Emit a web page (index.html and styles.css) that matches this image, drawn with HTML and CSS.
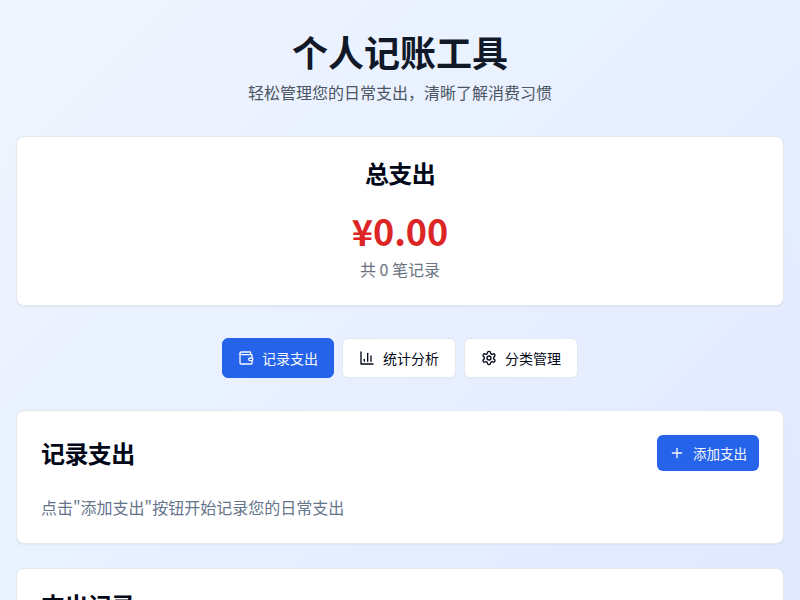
FILE: index.html
```html
<!DOCTYPE html>
<html lang="zh-CN">
<head>
<meta charset="utf-8">
<title>个人记账工具</title>
<link rel="stylesheet" href="styles.css">
</head>
<body>
<div class="page">
  <header class="header">
    <h1>个人记账工具</h1>
    <p>轻松管理您的日常支出，清晰了解消费习惯</p>
  </header>
  <section class="card total">
    <h2>总支出</h2>
    <div class="amount">¥0.00</div>
    <div class="count">共 0 笔记录</div>
  </section>
  <nav class="tabs">
    <button class="tab active">
      <svg class="icon" viewBox="0 0 24 24"><path d="M19 7V4a1 1 0 0 0-1-1H5a2 2 0 0 0 0 4h15a1 1 0 0 1 1 1v4h-3a2 2 0 0 0 0 4h3a1 1 0 0 0 1-1v-2a1 1 0 0 0-1-1"/><path d="M3 5v14a2 2 0 0 0 2 2h15a1 1 0 0 0 1-1v-4"/></svg>
      记录支出
    </button>
    <button class="tab">
      <svg class="icon" viewBox="0 0 24 24"><path d="M3 3v18h18"/><path d="M18 17V9"/><path d="M13 17V5"/><path d="M8 17v-3"/></svg>
      统计分析
    </button>
    <button class="tab">
      <svg class="icon" viewBox="0 0 24 24"><path d="M12.22 2h-.44a2 2 0 0 0-2 2v.18a2 2 0 0 1-1 1.73l-.43.25a2 2 0 0 1-2 0l-.15-.08a2 2 0 0 0-2.73.73l-.22.38a2 2 0 0 0 .73 2.73l.15.1a2 2 0 0 1 1 1.72v.51a2 2 0 0 1-1 1.74l-.15.09a2 2 0 0 0-.73 2.73l.22.38a2 2 0 0 0 2.73.73l.15-.08a2 2 0 0 1 2 0l.43.25a2 2 0 0 1 1 1.73V20a2 2 0 0 0 2 2h.44a2 2 0 0 0 2-2v-.18a2 2 0 0 1 1-1.73l.43-.25a2 2 0 0 1 2 0l.15.08a2 2 0 0 0 2.73-.73l.22-.39a2 2 0 0 0-.73-2.73l-.15-.08a2 2 0 0 1-1-1.74v-.5a2 2 0 0 1 1-1.74l.15-.09a2 2 0 0 0 .73-2.73l-.22-.38a2 2 0 0 0-2.73-.73l-.15.08a2 2 0 0 1-2 0l-.43-.25a2 2 0 0 1-1-1.73V4a2 2 0 0 0-2-2z"/><circle cx="12" cy="12" r="3"/></svg>
      分类管理
    </button>
  </nav>
  <section class="card panel">
    <div class="panel-head">
      <h2>记录支出</h2>
      <button class="add">
        <svg class="icon" viewBox="0 0 24 24"><path d="M5 12h14"/><path d="M12 5v14"/></svg>
        添加支出
      </button>
    </div>
    <p class="hint">点击"添加支出"按钮开始记录您的日常支出</p>
  </section>
  <section class="card panel">
    <div class="panel-head">
      <h2>支出记录</h2>
    </div>
  </section>
</div>
</body>
</html>
```
FILE: styles.css
```css
* { box-sizing: border-box; }
html, body { margin: 0; }
body {
  min-height: 760px;
  background: linear-gradient(135deg, #eff6ff 0%, #e0e7ff 100%);
  font-family: "Noto Sans CJK SC", "Noto Sans", sans-serif;
  color: #020817;
}
.page { padding: 31px 16px 16px; }
.header { text-align: center; margin-bottom: 32px; }
.header h1 {
  margin: 0 0 9px;
  font-size: 36px;
  line-height: 40px;
  font-weight: 700;
  color: #111827;
}
.header p { margin: 0; font-size: 16px; line-height: 24px; color: #4b5563; }
.card {
  background: #fff;
  border: 1px solid #e2e8f0;
  border-radius: 8px;
  box-shadow: 0 1px 2px rgba(0,0,0,.05);
}
.total { padding: 22px 24px 24px; text-align: center; margin-bottom: 32px; height: 170px; }
.total h2 { margin: 0; font-size: 24px; line-height: 28px; font-weight: 600; letter-spacing: -0.6px; }
.amount { font-size: 36px; line-height: 40px; font-weight: 700; color: #dc2626; margin-top: 23px; }
.count { font-size: 16px; line-height: 24px; color: #6b7280; margin-top: 7px; }
.tabs { display: flex; justify-content: center; gap: 8px; margin-bottom: 32px; }
.tab, .add {
  display: inline-flex;
  align-items: center;
  justify-content: center;
  gap: 8px;
  font: inherit;
  font-size: 14px;
  font-weight: 400;
  border-radius: 6px;
  cursor: pointer;
}
.tab {
  width: 114px;
  height: 40px;
  background: #fff;
  color: #020817;
  border: 1px solid #e2e8f0;
}
.tab.active { width: 112px; background: #2563eb; border-color: #2563eb; color: #f8fafc; }
.icon { width: 16px; height: 16px; fill: none; stroke: currentColor; stroke-width: 2; stroke-linecap: round; stroke-linejoin: round; flex: none; }
.panel { padding: 24px; margin-bottom: 24px; }
.panel-head { display: flex; justify-content: space-between; align-items: center; margin-bottom: 24px; }
.panel-head h2 { margin: 0; font-size: 24px; line-height: 24px; font-weight: 600; letter-spacing: -0.6px; }
.add {
  height: 36px;
  padding: 0 12px;
  background: #2563eb;
  color: #f8fafc;
  border: 0;
  font-size: 13.5px;
}
.hint { margin: 0; font-size: 16px; line-height: 24px; color: #64748b; }
```
